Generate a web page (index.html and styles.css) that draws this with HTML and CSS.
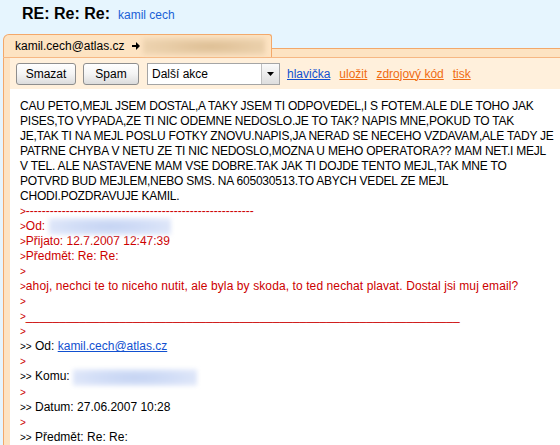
FILE: index.html
```html
<!DOCTYPE html>
<html lang="cs">

<head>
  <meta charset="UTF-8">
  <meta name="viewport" content="width=device-width, initial-scale=1.0">
  <title>RE: Re: Re:</title>
  <link rel="stylesheet" href="styles.css">
</head>

<body>
  <div class="title">
    <h1>RE: Re: Re:</h1>
    <a class="title__from" href="#">kamil cech</a>
  </div>

  <div class="mail">
    <div class="mail__head">
      <div class="mail__tab">
        <span>kamil.cech@atlas.cz</span>
        <svg class="mail__arrow" width="8" height="8" viewBox="0 0 8 8"><path d="M0 3h4V0l4 4-4 4V5H0z" fill="#000"/></svg>
        <span class="blur blur--tan"></span>
      </div>
      <div class="mail__band"></div>
    </div>

    <div class="mail__body">
      <div class="toolbar">
        <button class="btn btn--wide">Smazat</button>
        <button class="btn">Spam</button>
        <div class="select">
          <span class="select__value">Další akce</span>
          <span class="select__drop"><svg width="7" height="4" viewBox="0 0 7 4"><path d="M0 0h7L3.5 4z" fill="#000"/></svg></span>
        </div>
        <div class="toolbar__links">
          <a class="link-blue" href="#">hlavička</a>
          <a class="link-orange" href="#">uložit</a>
          <a class="link-orange" href="#">zdrojový kód</a>
          <a class="link-orange" href="#">tisk</a>
        </div>
      </div>

      <div class="content">
        <p class="text">
          CAU PETO,MEJL JSEM DOSTAL,A TAKY JSEM TI ODPOVEDEL,I S FOTEM.ALE DLE TOHO JAK<br>
          PISES,TO VYPADA,ZE TI NIC ODEMNE NEDOSLO.JE TO TAK? NAPIS MNE,POKUD TO TAK<br>
          JE,TAK TI NA MEJL POSLU FOTKY ZNOVU.NAPIS,JA NERAD SE NECEHO VZDAVAM,ALE TADY JE<br>
          PATRNE CHYBA V NETU ZE TI NIC NEDOSLO,MOZNA U MEHO OPERATORA?? MAM NET.I MEJL<br>
          V TEL. ALE NASTAVENE MAM VSE DOBRE.TAK JAK TI DOJDE TENTO MEJL,TAK MNE TO<br>
          POTVRD BUD MEJLEM,NEBO SMS. NA 605030513.TO ABYCH VEDEL ZE MEJL<br>
          CHODI.POZDRAVUJE KAMIL.
        </p>
        <div class="quote">
          <div><span class="gt">&gt;</span>---------------------------------------------------------</div>
          <div><span class="gt">&gt;</span>Od: <span class="blur blur--blue"></span></div>
          <div><span class="gt">&gt;</span>Přijato: 12.7.2007 12:47:39</div>
          <div><span class="gt">&gt;</span>Předmět: Re: Re:</div>
          <div><span class="gt">&gt;</span></div>
          <div class="quote__wide"><span class="gt">&gt;</span>ahoj, nechci te to niceho nutit, ale byla by skoda, to ted nechat plavat. Dostal jsi muj email?</div>
          <div><span class="gt">&gt;</span></div>
          <div><span class="gt">&gt;</span>_________________________________________________________________</div>
          <div><span class="gt">&gt;</span></div>
          <div class="quote__old"><span class="gt">&gt;&gt;</span> Od: <a href="#">kamil.cech@atlas.cz</a></div>
          <div><span class="gt">&gt;</span></div>
          <div class="quote__old"><span class="gt">&gt;&gt;</span> Komu: <span class="blur blur--blue blur--wide"></span></div>
          <div><span class="gt">&gt;</span></div>
          <div class="quote__old"><span class="gt">&gt;&gt;</span> Datum: 27.06.2007 10:28</div>
          <div><span class="gt">&gt;</span></div>
          <div class="quote__old"><span class="gt">&gt;&gt;</span> Předmět: Re: Re:</div>
        </div>
      </div>
    </div>
  </div>
</body>

</html>
```

FILE: styles.css
```css
html,
body {
  height: 100%;
}

body {
  margin: 0;
  background-color: #e6f5fe;
  font-family: "Liberation Sans", Arial, sans-serif;
  font-size: 12px;
  color: #000;
  overflow: hidden;
}

.title {
  display: flex;
  align-items: baseline;
  height: 34px;
  box-sizing: border-box;
  padding: 5px 22px 0;
}

.title h1 {
  margin: 0;
  font-size: 16px;
  line-height: 18px;
  font-weight: bold;
}

.title__from {
  margin-left: 8px;
  color: #1a5fd6;
  text-decoration: none;
}

/* mail panel */
.mail {
  margin-left: 3px;
}

.mail__head {
  display: flex;
  align-items: flex-end;
  border-bottom: 1px solid #f6b783;
}

.mail__tab {
  display: flex;
  align-items: center;
  height: 22px;
  width: 256px;
  padding-left: 11px;
  background-color: #fde3c2;
  border: 1px solid #f3a86a;
  border-bottom: none;
  border-radius: 6px 3px 0 0;
}

.mail__arrow {
  margin: 0 3px 0 7px;
}

.mail__band {
  flex-grow: 1;
  height: 8px;
  background-color: #fde3c2;
  border-top: 1px solid #f3a86a;
}

.mail__body {
  background-color: #fde3c2;
  border-left: 1px solid #f3a86a;
  padding-left: 6px;
}

/* blurred addresses */
.blur {
  display: inline-block;
  vertical-align: middle;
  filter: blur(2px);
}

.blur--tan {
  width: 122px;
  height: 17px;
  background: radial-gradient(ellipse at 55% 50%, #dcbd92 0%, #e8cca6 45%, #f2d9b8 100%);
}

.blur--blue {
  width: 122px;
  height: 17px;
  margin: -1px 0;
  background: radial-gradient(ellipse at 50% 50%, #c3d2f2 0%, #d4dff7 50%, #e9eefb 100%);
}

.blur--wide {
  width: 124px;
}

/* toolbar */
.toolbar {
  display: flex;
  align-items: center;
  gap: 7px;
  height: 31px;
  padding: 0 6px;
  background-color: #fff0dc;
}

.btn {
  height: 22px;
  width: 56px;
  padding: 0;
  font-family: inherit;
  font-size: 12px;
  color: #000;
  background: linear-gradient(#ffffff, #f4f4f4 50%, #dcdcdc);
  border: 1px solid #8e8e8e;
  border-radius: 3px;
}

.btn--wide {
  width: 60px;
}

.select {
  display: flex;
  width: 133px;
  height: 22px;
  box-sizing: border-box;
  margin-left: 1px;
  background-color: #fff;
  border: 1px solid #a5a5a5;
}

.select__value {
  flex-grow: 1;
  padding-left: 4px;
  line-height: 20px;
}

.select__drop {
  display: flex;
  align-items: center;
  justify-content: center;
  width: 17px;
  background: linear-gradient(#fafafa, #dedede);
  border-left: 1px solid #c0c0c0;
}

.toolbar__links {
  display: flex;
  gap: 9px;
}

.link-blue {
  color: #1150d0;
}

.link-orange {
  color: #f06c12;
}

/* message */
.content {
  background-color: #fff;
  padding: 10px 4px 20px 10px;
  line-height: 15px;
  white-space: nowrap;
}

.text {
  margin: 0;
  letter-spacing: -0.22px;
}

.quote {
  color: #cc0000;
}

.quote__wide {
  letter-spacing: 0.1px;
}

.gt {
  font-size: 10px;
  letter-spacing: 0;
}

.quote__old {
  color: #000;
}

.quote__old a {
  color: #1150d0;
}
```
